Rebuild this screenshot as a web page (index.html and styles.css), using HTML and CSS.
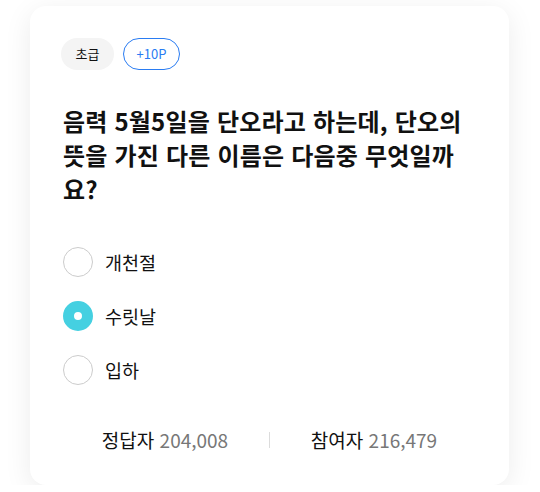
FILE: index.html
```html
<!DOCTYPE html>
<html lang="ko">
<head>
<meta charset="utf-8">
<link rel="stylesheet" href="styles.css">
</head>
<body>
<div class="card">
  <div class="badges">
    <span class="badge level">초급</span>
    <span class="badge point">+10P</span>
  </div>
  <h1 class="question">음력 5월5일을 단오라고 하는데, 단오의 뜻을 가진 다른 이름은 다음중 무엇일까요?</h1>
  <ul class="options">
    <li class="option"><span class="radio"></span><span class="label">개천절</span></li>
    <li class="option selected"><span class="radio"></span><span class="label">수릿날</span></li>
    <li class="option"><span class="radio"></span><span class="label">입하</span></li>
  </ul>
  <div class="stats">
    <div class="stat"><span class="stat-label">정답자</span> <span class="stat-num">204,008</span></div>
    <span class="divider"></span>
    <div class="stat"><span class="stat-label">참여자</span> <span class="stat-num">216,479</span></div>
  </div>
</div>
</body>
</html>
```
FILE: styles.css
```css
* { box-sizing: border-box; }
body {
  margin: 0;
  background: #ffffff;
  font-family: "Noto Sans CJK KR", "Noto Sans", sans-serif;
  color: #111;
}
.card {
  margin: 6px 0 0 30px;
  width: 479px;
  height: 479px;
  background: #fff;
  border-radius: 16px;
  box-shadow: 0 6px 28px rgba(0, 0, 0, 0.08);
  padding: 32px 31px 0 31px;
  display: flex;
  flex-direction: column;
}
.badges {
  display: flex;
  gap: 9px;
}
.badge {
  height: 32px;
  border-radius: 16px;
  font-size: 13px;
  line-height: 32px;
  display: inline-flex;
  align-items: center;
  justify-content: center;
}
.level {
  width: 53px;
  background: #f4f4f4;
  color: #111;
}
.point {
  width: 57px;
  border: 1px solid #2a7cf2;
  color: #2a7cf2;
}
.question {
  margin: 34px 0 0 2px;
  font-size: 24px;
  line-height: 34px;
  font-weight: 700;
  color: #111;
  letter-spacing: 0.2px;
}
.options {
  list-style: none;
  margin: 41px 0 0 2px;
  padding: 0;
  display: flex;
  flex-direction: column;
  gap: 24px;
}
.option {
  display: flex;
  align-items: center;
  height: 30px;
  gap: 12px;
}
.radio {
  width: 30px;
  height: 30px;
  border-radius: 50%;
  border: 1.5px solid #cccccc;
  background: #fff;
  flex: none;
}
.selected .radio {
  border: 11px solid #45d0e1;
  background: #fff;
}
.label {
  font-size: 18.5px;
  color: #111;
}
.stats {
  margin-top: 43px;
  display: flex;
  align-items: center;
}
.stat {
  flex: 1;
  text-align: center;
  font-size: 19px;
  line-height: 24px;
}
.stat-label { color: #111; }
.stat-num { color: #777; font-weight: 400; }
.divider {
  width: 1px;
  height: 16px;
  background: #dcdcdc;
  flex: none;
}
```
